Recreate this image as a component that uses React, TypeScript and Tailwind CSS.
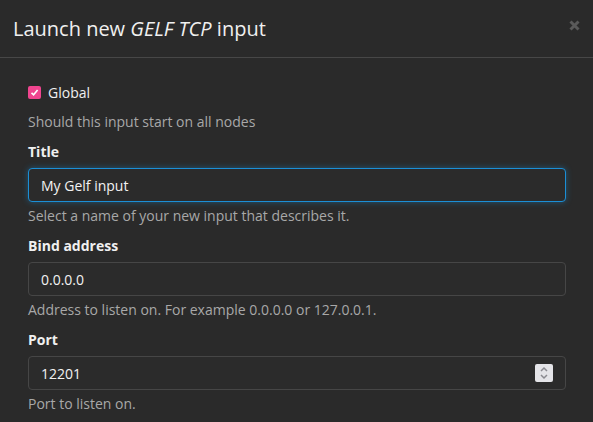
import React from 'react';

const font = { fontFamily: '"Open Sans", "Noto Sans", sans-serif' };

function Field({
  label,
  value,
  help,
  focused,
  spinner,
}: {
  label: string;
  value: string;
  help: string;
  focused?: boolean;
  spinner?: boolean;
}) {
  return (
    <div className="mb-[10px]">
      <div className="mb-[6px] text-[14px] font-bold leading-[20px] text-[#f0f0f0]">{label}</div>
      <div
        className={
          'relative flex h-[34px] items-center rounded-[4px] border bg-[#2b2b2b] px-[12px] text-[14px] text-[#f2f2f2] ' +
          (focused
            ? 'border-[#1b8fd6] shadow-[0_0_6px_rgba(27,143,214,0.45)]'
            : 'border-[#464646]')
        }
      >
        <input
          readOnly
          value={value}
          className="w-full bg-transparent text-[14px] text-[#f2f2f2] outline-none"
          style={font}
        />
        {spinner && (
          <span className="absolute right-[12px] top-[7px] flex h-[18px] w-[18px] flex-col items-center justify-center rounded-[2px] bg-[#e4e4e8]">
            <svg width="10" height="14" viewBox="0 0 10 14" fill="none" stroke="#8a8a90" strokeWidth="1.5">
              <path d="M2 5 L5 2 L8 5" />
              <path d="M2 9 L5 12 L8 9" />
            </svg>
          </span>
        )}
      </div>
      <div className="mt-[4px] text-[14px] leading-[20px] text-[#a8a8a8]">{help}</div>
    </div>
  );
}

export default function App() {
  return (
    <div className="h-[422px] w-[593px] overflow-hidden bg-[#2a2a2a]" style={font}>
      {/* header */}
      <div className="flex h-[58px] items-center justify-between border-b border-[#474747] pl-[13px] pr-[13px]">
        <h1 className="text-[20px] leading-[28px] text-[#f0f0f0]">
          Launch new <em>GELF TCP</em> input
        </h1>
        <svg width="11" height="11" viewBox="0 0 11 11" className="mb-[6px]">
          <path d="M1.5 1.5 L9.5 9.5 M9.5 1.5 L1.5 9.5" stroke="#5a5a5a" strokeWidth="3" />
        </svg>
      </div>

      {/* body */}
      <div className="pl-[28px] pr-[27px] pt-[24px]">
        <label className="flex h-[20px] items-center gap-[7px] text-[14px] text-[#f0f0f0]">
          <span className="flex h-[13px] w-[13px] items-center justify-center rounded-[2px] bg-[#f0458f]">
            <svg width="9" height="9" viewBox="0 0 9 9" fill="none" stroke="#fff" strokeWidth="1.6">
              <path d="M1.5 4.8 L3.6 6.8 L7.6 2" />
            </svg>
          </span>
          Global
        </label>
        <div className="mt-[10px] mb-[10px] text-[14px] leading-[20px] text-[#a8a8a8]">
          Should this input start on all nodes
        </div>

        <Field
          label="Title"
          value="My Gelf input"
          help="Select a name of your new input that describes it."
          focused
        />
        <Field
          label="Bind address"
          value="0.0.0.0"
          help="Address to listen on. For example 0.0.0.0 or 127.0.0.1."
        />
        <Field label="Port" value="12201" help="Port to listen on." spinner />
      </div>
    </div>
  );
}
